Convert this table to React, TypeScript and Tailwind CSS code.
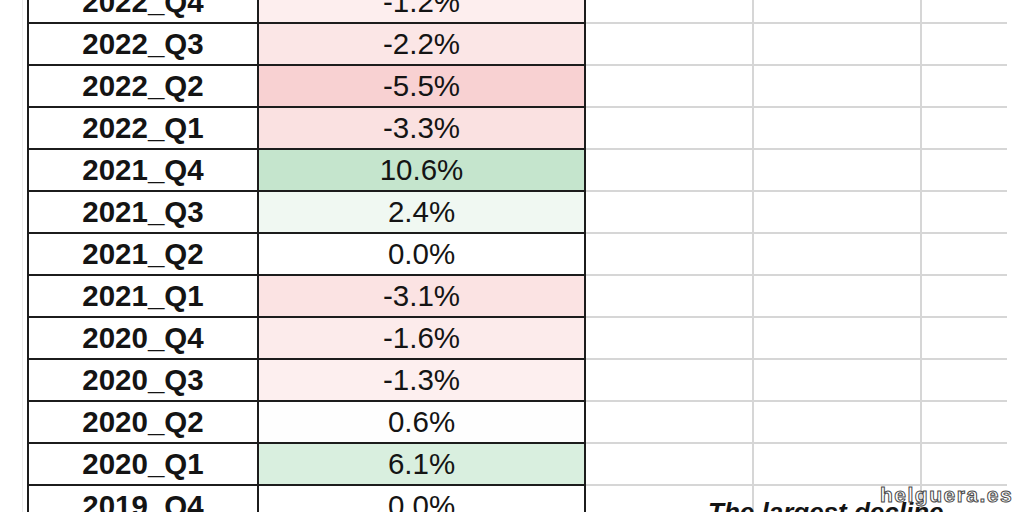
import React from "react";

type Row = { q: string; v: string; bg: string };

const rows: Row[] = [
  { q: "2022_Q4", v: "-1.2%", bg: "bg-[#fdeeee]" },
  { q: "2022_Q3", v: "-2.2%", bg: "bg-[#fbe6e6]" },
  { q: "2022_Q2", v: "-5.5%", bg: "bg-[#f8d1d2]" },
  { q: "2022_Q1", v: "-3.3%", bg: "bg-[#fae1e1]" },
  { q: "2021_Q4", v: "10.6%", bg: "bg-[#c5e5cd]" },
  { q: "2021_Q3", v: "2.4%", bg: "bg-[#f0f8f2]" },
  { q: "2021_Q2", v: "0.0%", bg: "bg-white" },
  { q: "2021_Q1", v: "-3.1%", bg: "bg-[#fbe3e3]" },
  { q: "2020_Q4", v: "-1.6%", bg: "bg-[#fcebeb]" },
  { q: "2020_Q3", v: "-1.3%", bg: "bg-[#fdefef]" },
  { q: "2020_Q2", v: "0.6%", bg: "bg-[#fefefe]" },
  { q: "2020_Q1", v: "6.1%", bg: "bg-[#d9efdf]" },
  { q: "2019_Q4", v: "0.0%", bg: "bg-white" },
];

function App() {
  return (
    <div className="relative w-[1024px] h-[512px] overflow-hidden bg-white font-['Liberation_Sans',Arial,sans-serif] text-[#141414]">
      <div className="-mt-[18px] flex flex-col">
        {rows.map((r, i) => (
          <div className="flex h-[42px]" key={r.q}>
            {/* margin with faint guide */}
            <div className="w-[27px] flex justify-end pr-[4px]">
              <div className="w-px bg-[#ececec]" />
            </div>
            <div className="w-[230px] border-l-2 border-b-2 border-[#1c1c1c] flex items-center justify-center text-[29.5px] font-bold leading-none">
              {r.q}
            </div>
            <div className={`w-[329px] border-l-2 border-r-2 border-b-2 border-[#1c1c1c] flex items-center justify-center text-[29.5px] leading-none ${r.bg}`}>
              {r.v}
            </div>
            <div className="relative w-[166px] border-b-2 border-[#d6d6d6]">
              {i === rows.length - 1 && (
                <span className="absolute left-[122px] top-[11px] whitespace-nowrap text-[26px] font-bold italic leading-[30px]">
                  The largest decline
                </span>
              )}
            </div>
            <div className="w-[168px] border-l-2 border-b-2 border-[#d6d6d6]" />
            <div className="w-[87px] border-l-2 border-b-2 border-[#d6d6d6]" />
          </div>
        ))}
      </div>

      {/* watermark */}
      <div className="absolute left-[880px] top-[482px] text-[21px] leading-[26px] font-bold tracking-[1.5px] text-white [-webkit-text-stroke:1px_#4a4a4a]">
        helguera.es
      </div>
    </div>
  );
}

export default App;
